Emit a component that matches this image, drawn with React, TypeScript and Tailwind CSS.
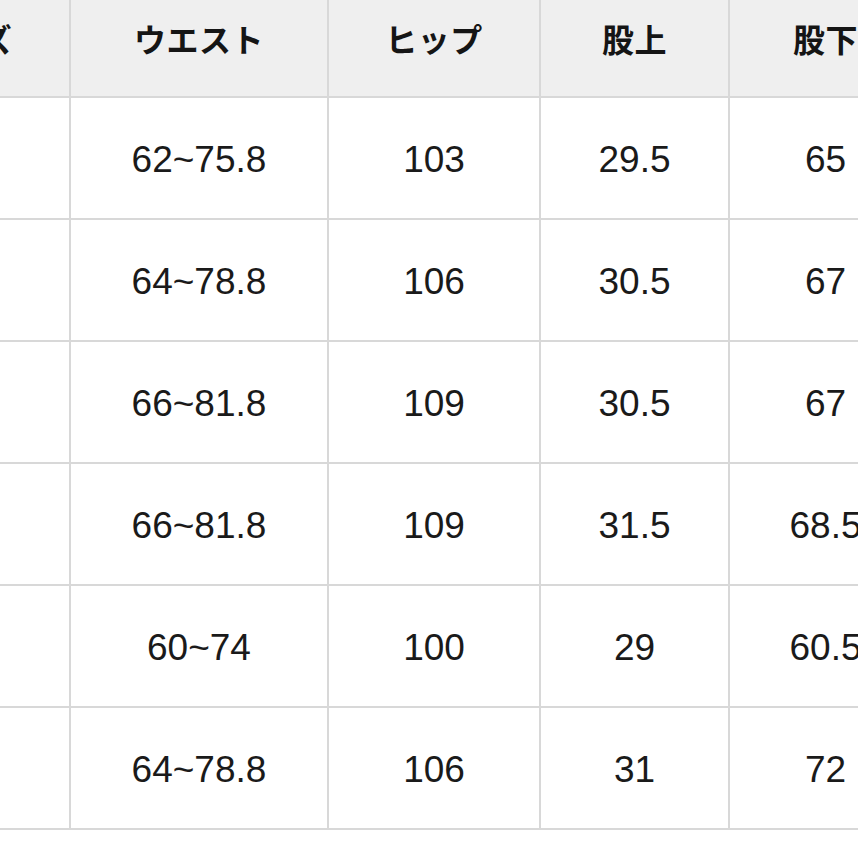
import React from 'react';

const headers = ['サイズ', 'ウエスト', 'ヒップ', '股上', '股下'];

const rows: string[][] = [
  ['S', '62~75.8', '103', '29.5', '65'],
  ['M', '64~78.8', '106', '30.5', '67'],
  ['L', '66~81.8', '109', '30.5', '67'],
  ['L', '66~81.8', '109', '31.5', '68.5'],
  ['XS', '60~74', '100', '29', '60.5'],
  ['M', '64~78.8', '106', '31', '72'],
];

const App: React.FC = () => {
  return (
    <div className="w-[858px] h-[858px] overflow-hidden bg-white">
      <div className="ml-[-141px] mt-[-24px] grid w-[1064px] grid-cols-[212px_258px_212px_189px_193px] text-[#151515]">
        {headers.map((h) => (
          <div
            key={h}
            className="flex h-[122px] items-center justify-center border-r-2 border-b-2 border-[#d8d8d8] bg-[#efefef] pt-[4px] text-[32px] font-bold tracking-[0.5px] [font-family:'Noto_Sans_CJK_JP',sans-serif]"
          >
            {h}
          </div>
        ))}
        {rows.map((row, i) =>
          row.map((cell, j) => (
            <div
              key={`${i}-${j}`}
              className="flex h-[122px] items-center justify-center border-r-2 border-b-2 border-[#d8d8d8] bg-white pt-[3px] text-[37px] text-[#1a1a1a] [font-family:'Liberation_Sans',sans-serif]"
            >
              {j === 0 ? '' : cell}
            </div>
          ))
        )}
      </div>
    </div>
  );
};

export default App;
